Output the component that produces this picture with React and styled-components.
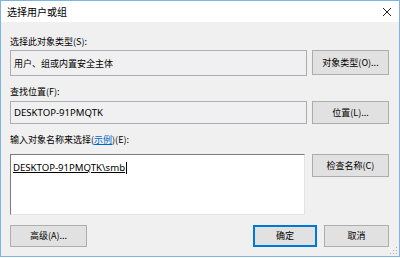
import React from "react";
import styled, { createGlobalStyle } from "styled-components";

const Global = createGlobalStyle`
  html, body { margin: 0; padding: 0; background: #ffffff; }
  body { font-family: "Noto Sans", "Noto Sans CJK SC", sans-serif; }
`;

const Window = styled.div`
  box-sizing: border-box;
  width: 400px;
  height: 257px;
  border: 1px solid #7eb4e0;
  display: flex;
  flex-direction: column;
  font-family: "Noto Sans", "Noto Sans CJK SC", sans-serif;
  font-size: 9px;
  color: #000;
`;

const TitleBar = styled.div`
  height: 21px;
  background: #ffffff;
  display: flex;
  align-items: center;
  justify-content: space-between;
  padding: 0 7px 0 6px;
  flex-shrink: 0;
`;

const Title = styled.span`
  font-size: 10px;
  line-height: 12px;
  font-family: "Noto Sans CJK SC", sans-serif;
`;

const Body = styled.div`
  flex: 1;
  background: #f0f0f0;
  padding: 13px 10px 0 9px;
  display: flex;
  flex-direction: column;
  position: relative;
`;

const Label = styled.div`
  line-height: 13px;
  height: 13px;
  font-family: "Noto Sans CJK SC", sans-serif;
  margin-bottom: ${(p) => p.$gap}px;
  margin-top: ${(p) => p.$top || 0}px;
`;

const Link = styled.span`
  color: #0066cc;
  text-decoration: underline;
`;

const Row = styled.div`
  display: flex;
  align-items: flex-start;
  justify-content: space-between;
`;

const Field = styled.div`
  box-sizing: border-box;
  width: ${(p) => p.$w}px;
  height: ${(p) => p.$h}px;
  border: 1px solid #abadb3;
  background: ${(p) => (p.$white ? "#ffffff" : "#f0f0f0")};
  padding: ${(p) => p.$pad || "0 0 0 3px"};
  display: flex;
  align-items: ${(p) => (p.$top ? "flex-start" : "center")};
  font-family: "Noto Sans", "Noto Sans CJK SC", sans-serif;
  white-space: nowrap;
`;

const Latin = styled.span`
  font-size: 9.6px;
  line-height: 13px;
  text-decoration: ${(p) => (p.$underline ? "underline" : "none")};
`;

const TextArea = styled(Field)`
  border-color: #7a7a7a #e3e3e3 #e3e3e3 #7a7a7a;
`;

const Caret = styled.span`
  display: inline-block;
  width: 1px;
  height: 12px;
  background: #000;
  margin-top: 1px;
  margin-left: 1px;
`;

const Button = styled.div`
  box-sizing: border-box;
  width: ${(p) => p.$w}px;
  height: ${(p) => p.$h}px;
  background: #e1e1e1;
  border: ${(p) => (p.$default ? "2px solid #0078d7" : "1px solid #adadad")};
  display: flex;
  align-items: center;
  justify-content: center;
  font-family: "Noto Sans CJK SC", sans-serif;
  line-height: 12px;
`;

const Footer = styled.div`
  display: flex;
  align-items: center;
  margin-top: 10px;
`;

const Spacer = styled.div`
  flex: 1;
`;

const Grip = styled.svg`
  position: absolute;
  right: 1px;
  bottom: 1px;
`;

const Gap = styled.div`
  width: ${(p) => p.$w}px;
`;

export default function App() {
  return (
    <>
      <Global />
      <Window>
        <TitleBar>
          <Title>选择用户或组</Title>
          <svg width="10" height="10" viewBox="0 0 10 10">
            <path d="M1 1 L9 9 M9 1 L1 9" stroke="#222" strokeWidth="1" />
          </svg>
        </TitleBar>
        <Body>
          <Label $gap={2}>选择此对象类型(S):</Label>
          <Row>
            <Field $w={297} $h={26}>用户、组或内置安全主体</Field>
            <Button $w={77} $h={25}>对象类型(O)...</Button>
          </Row>
          <Label $top={9} $gap={3}>查找位置(F):</Label>
          <Row>
            <Field $w={297} $h={23}>
              <Latin>DESKTOP-91PMQTK</Latin>
            </Field>
            <Button $w={77} $h={23}>位置(L)...</Button>
          </Row>
          <Label $top={9} $gap={8}>
            输入对象名称来选择(<Link>示例</Link>)(E):
          </Label>
          <Row>
            <TextArea $w={295} $h={61} $white $top $pad="6px 0 0 2px">
              <Latin $underline>DESKTOP-91PMQTK\smb</Latin>
              <Caret />
            </TextArea>
            <Button $w={77} $h={23}>检查名称(C)</Button>
          </Row>
          <Footer>
            <Button $w={77} $h={22}>高级(A)...</Button>
            <Spacer />
            <Button $w={64} $h={22} $default>确定</Button>
            <Gap $w={7} />
            <Button $w={65} $h={22}>取消</Button>
          </Footer>
          <Grip width="8" height="8" viewBox="0 0 8 8">
            <rect x="6" y="0" width="1" height="1" fill="#b0b0b0" />
            <rect x="3" y="3" width="1" height="1" fill="#b0b0b0" />
            <rect x="6" y="3" width="1" height="1" fill="#b0b0b0" />
            <rect x="0" y="6" width="1" height="1" fill="#b0b0b0" />
            <rect x="3" y="6" width="1" height="1" fill="#b0b0b0" />
            <rect x="6" y="6" width="1" height="1" fill="#b0b0b0" />
          </Grip>
        </Body>
      </Window>
    </>
  );
}
